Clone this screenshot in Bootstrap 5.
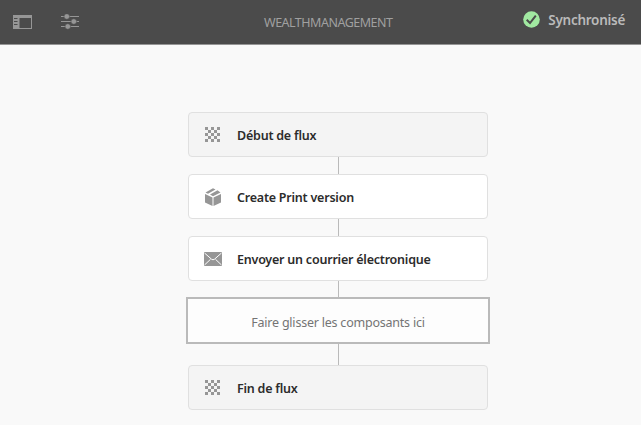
<!DOCTYPE html>
<html lang="fr">
<head>
<meta charset="utf-8">
<meta name="viewport" content="width=device-width, initial-scale=1">
<title>WealthManagement</title>
<link href="https://cdn.jsdelivr.net/npm/bootstrap@5.3.0/dist/css/bootstrap.min.css" rel="stylesheet">
<style>
body{background:#f9f9f9;font-family:"Noto Sans","Open Sans",sans-serif;font-size:12.5px;line-height:20px;color:#2c2c2c;overflow:hidden}
.topbar{height:45px;background:#4b4b4b;border-bottom:1px solid #969696;color:#a0a0a0;padding:0 16px 0 13px;display:grid;grid-template-columns:251px 129px 1fr}
.tools{gap:29px}
.title{letter-spacing:-.5px}
.status{color:#bababa;font-weight:600;font-size:13.5px;letter-spacing:-.28px;gap:8px;padding-bottom:5px}
.flow{padding:67px 0 0 35px}
.step{width:300px;height:45px;background:#fff;border:1px solid #e0e0e0;border-radius:4px;padding-left:14px;font-weight:600;letter-spacing:-.22px}
.step.edge{background:#f4f4f4}
.step svg{width:20px;height:21px;margin-right:14px;fill:#969696}
.link-line{width:1px;height:17px;background:#bababa}
.drop{width:304px;height:47px;border:2px solid #bababa;background:#fdfdfd;color:#747474;padding-top:3px;letter-spacing:-.22px}
.t{display:block;white-space:nowrap}
.step .t,.drop .t,.title{padding-top:2px}
</style>
</head>
<body>
<header class="topbar align-items-center">
  <div class="tools d-flex align-items-center">
    <svg width="19" height="14" viewBox="0 0 19 14" fill="#969696"><path fill-rule="evenodd" d="M0 0H19V14H0ZM6.5 3V13H18V3ZM1 3V4H4.5V3ZM1 6V7H4.5V6ZM1 9V10H4.5V9Z"/></svg>
    <svg width="19" height="16" viewBox="0 0 19 16" fill="#969696"><path d="M0 2H18V3H0ZM0 7H18V8H0ZM0 12H18V13H0Z"/><g stroke="#4b4b4b" stroke-width=".6"><circle cx="5.8" cy="2.5" r="2.8"/><circle cx="12.8" cy="7.5" r="2.8"/><circle cx="6.8" cy="12.5" r="2.8"/></g></svg>
  </div>
  <div><span class="title t">WEALTHMANAGEMENT</span></div>
  <div class="status d-flex align-items-center justify-content-end">
    <svg width="17" height="17" viewBox="0 0 17 17"><circle cx="8.5" cy="8.5" r="8.3" fill="#a1e9a1"/><path d="M3.7 8.8 7 12 12.8 4.6" fill="none" stroke="#4b4b4b" stroke-width="2"/></svg>
    <span class="t">Synchronisé</span>
  </div>
</header>
<main class="flow d-flex flex-column align-items-center">
  <div class="step edge d-flex align-items-center"><svg viewBox="0 0 20 21"><use href="#checker"/></svg><span class="t">Début de flux</span></div>
  <div class="link-line"></div>
  <div class="step d-flex align-items-center"><svg viewBox="0 0 20 21"><path d="M2 8 9.5 11.5V20L2 16.5ZM10.5 11.5 18 8V16.5L10.5 20ZM2.5 6.5 10 2.3 12.5 3.4 5 7.7ZM7 8.6 14.5 4.3 17.5 6.4 10 10.2Z"/></svg><span class="t">Create Print version</span></div>
  <div class="link-line"></div>
  <div class="step d-flex align-items-center"><svg viewBox="0 0 20 21"><path d="M1 4H19V18H1Z"/><path d="M1.5 5 8.5 11.2Q10 12.4 11.5 11.2L18.5 5M1.5 17 7.5 11.3M18.5 17 12.5 11.3" fill="none" stroke="#fff"/></svg><span class="t">Envoyer un courrier électronique</span></div>
  <div class="link-line" style="height:16px"></div>
  <div class="drop d-flex align-items-center justify-content-center"><span class="t">Faire glisser les composants ici</span></div>
  <div class="link-line" style="height:21px"></div>
  <div class="step edge d-flex align-items-center"><svg viewBox="0 0 20 21"><use href="#checker"/></svg><span class="t">Fin de flux</span></div>
</main>
<svg width="0" height="0" class="position-absolute"><defs><path id="checker" transform="translate(0 1)" d="M2 2h3v3H2zM8 2h3v3H8zM14 2h3v3h-3zM5 5h3v3H5zM11 5h3v3h-3zM2 8h3v3H2zM8 8h3v3H8zM14 8h3v3h-3zM5 11h3v3H5zM11 11h3v3h-3zM2 14h3v3H2zM8 14h3v3H8zM14 14h3v3h-3z"/></defs></svg>
</body>
</html>
